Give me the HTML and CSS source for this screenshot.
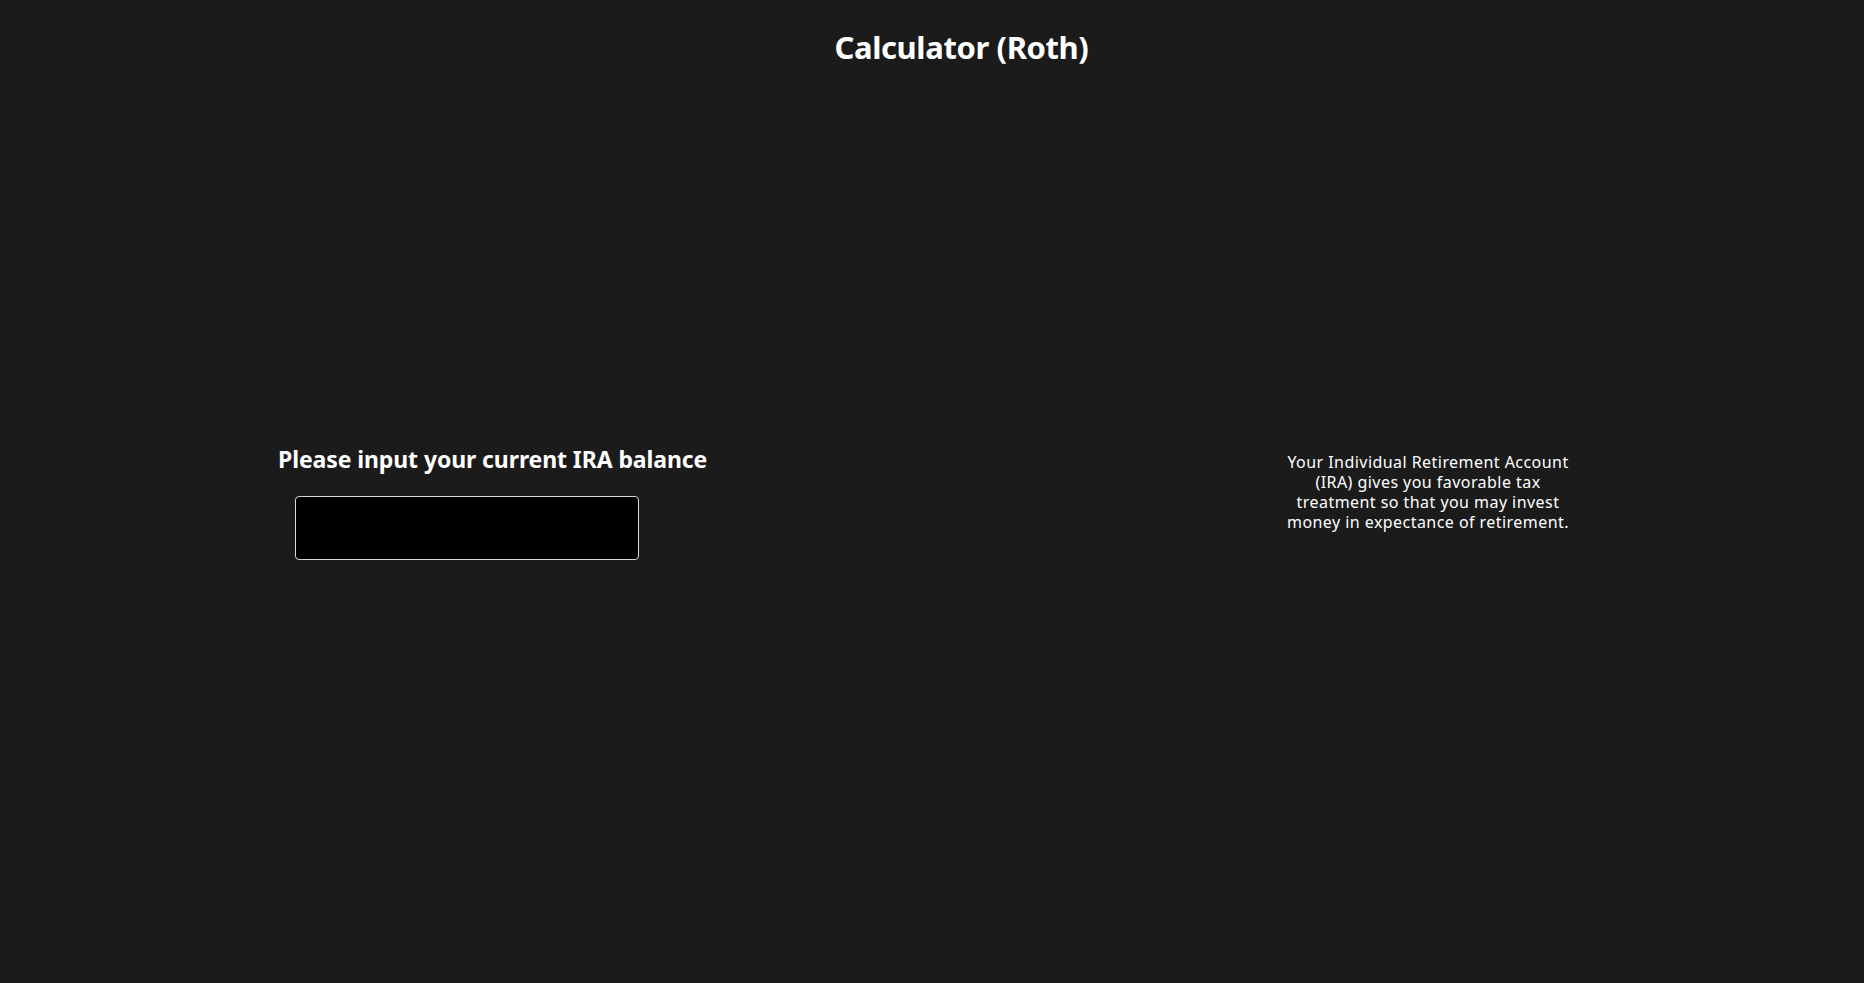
FILE: index.html
```html
<!DOCTYPE html>
<html lang="en">
<head>
<meta charset="utf-8">
<title>Calculator (Roth)</title>
<link rel="stylesheet" href="styles.css">
</head>
<body>
<header class="top">
  <h1 class="title">Calculator (Roth)</h1>
</header>
<main class="row">
  <section class="left">
    <h2 class="prompt">Please input your current IRA balance</h2>
    <input class="balance" type="text" aria-label="IRA balance">
  </section>
  <section class="right">
    <p class="info">Your Individual Retirement Account (IRA) gives you favorable tax treatment so that you may invest money in expectance of retirement.</p>
  </section>
</main>
</body>
</html>
```

FILE: styles.css
```css
html, body {
  margin: 0;
  padding: 0;
}
body {
  background: #1b1b1b;
  color: #ffffff;
  font-family: "Noto Sans", "DejaVu Sans", sans-serif;
  width: 1864px;
  height: 983px;
  overflow: hidden;
}
.top {
  display: flex;
  justify-content: center;
  padding-top: 27px;
  padding-left: 59px;
}
.title {
  margin: 0;
  font-size: 31px;
  line-height: 40px;
  font-weight: 700;
  letter-spacing: -0.4px;
}
.row {
  display: flex;
  margin-top: 377px;
}
.left {
  display: flex;
  flex-direction: column;
  align-items: flex-start;
  padding-left: 278px;
  width: 700px;
}
.prompt {
  margin: 0;
  font-size: 23px;
  line-height: 30px;
  font-weight: 700;
  letter-spacing: -0.1px;
}
.balance {
  margin: 22px 0 0 17px;
  width: 344px;
  height: 64px;
  box-sizing: border-box;
  background: #000000;
  border: 1px solid #d9d9d9;
  border-radius: 4px;
  outline: none;
  color: #fff;
}
.right {
  display: flex;
  justify-content: center;
  margin-left: 300px;
  width: 300px;
}
.info {
  margin: 8px 0 0 0;
  width: 300px;
  text-align: center;
  font-size: 16px;
  line-height: 20px;
  letter-spacing: 0.45px;
}
```
